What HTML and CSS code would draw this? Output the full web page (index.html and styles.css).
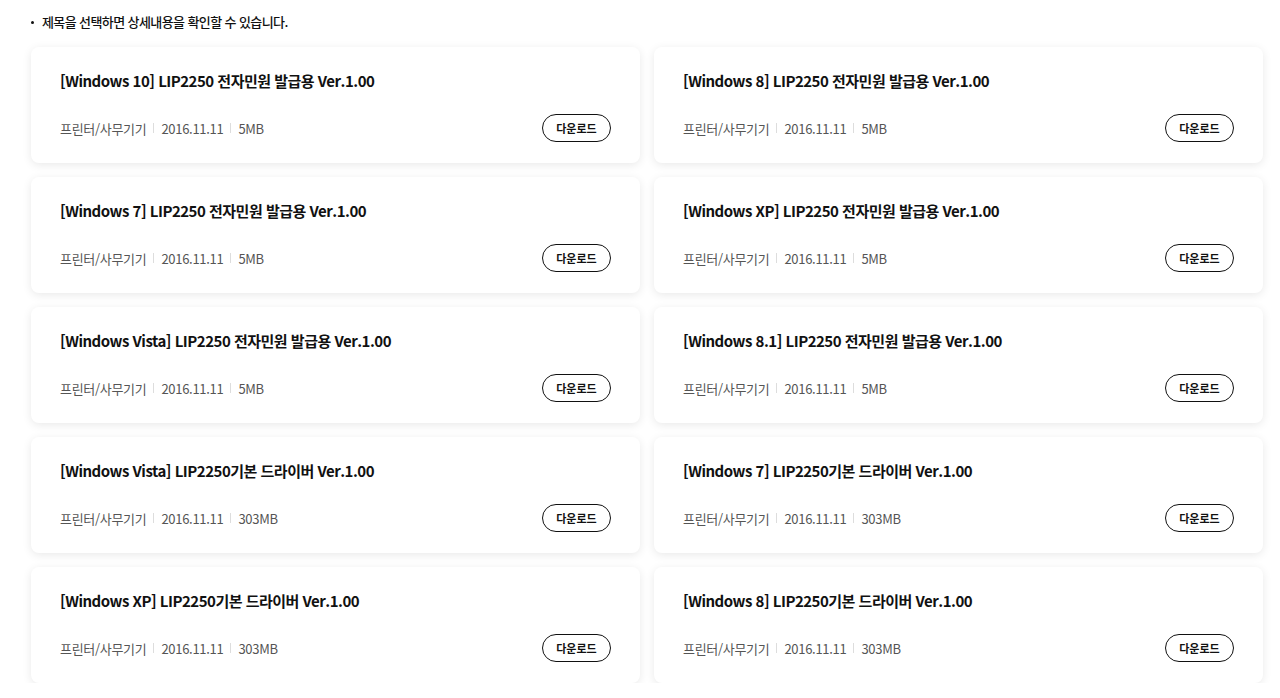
FILE: index.html
```html
<!DOCTYPE html>
<html lang="ko">
<head>
<meta charset="utf-8">
<link rel="stylesheet" href="styles.css">
</head>
<body>
<div class="page">
  <p class="notice"><span class="dot"></span>제목을 선택하면 상세내용을 확인할 수 있습니다.</p>
  <ul class="grid">
    <li class="card"><h3 class="title">[Windows 10] LIP2250 전자민원 발급용 Ver.1.00</h3><div class="meta"><div class="info"><span>프린터/사무기기</span><span class="sep"></span><span>2016.11.11</span><span class="sep"></span><span>5MB</span></div><button class="btn">다운로드</button></div></li>
    <li class="card"><h3 class="title">[Windows 8] LIP2250 전자민원 발급용 Ver.1.00</h3><div class="meta"><div class="info"><span>프린터/사무기기</span><span class="sep"></span><span>2016.11.11</span><span class="sep"></span><span>5MB</span></div><button class="btn">다운로드</button></div></li>
    <li class="card"><h3 class="title">[Windows 7] LIP2250 전자민원 발급용 Ver.1.00</h3><div class="meta"><div class="info"><span>프린터/사무기기</span><span class="sep"></span><span>2016.11.11</span><span class="sep"></span><span>5MB</span></div><button class="btn">다운로드</button></div></li>
    <li class="card"><h3 class="title">[Windows XP] LIP2250 전자민원 발급용 Ver.1.00</h3><div class="meta"><div class="info"><span>프린터/사무기기</span><span class="sep"></span><span>2016.11.11</span><span class="sep"></span><span>5MB</span></div><button class="btn">다운로드</button></div></li>
    <li class="card"><h3 class="title">[Windows Vista] LIP2250 전자민원 발급용 Ver.1.00</h3><div class="meta"><div class="info"><span>프린터/사무기기</span><span class="sep"></span><span>2016.11.11</span><span class="sep"></span><span>5MB</span></div><button class="btn">다운로드</button></div></li>
    <li class="card"><h3 class="title">[Windows 8.1] LIP2250 전자민원 발급용 Ver.1.00</h3><div class="meta"><div class="info"><span>프린터/사무기기</span><span class="sep"></span><span>2016.11.11</span><span class="sep"></span><span>5MB</span></div><button class="btn">다운로드</button></div></li>
    <li class="card"><h3 class="title">[Windows Vista] LIP2250기본 드라이버 Ver.1.00</h3><div class="meta"><div class="info"><span>프린터/사무기기</span><span class="sep"></span><span>2016.11.11</span><span class="sep"></span><span>303MB</span></div><button class="btn">다운로드</button></div></li>
    <li class="card"><h3 class="title">[Windows 7] LIP2250기본 드라이버 Ver.1.00</h3><div class="meta"><div class="info"><span>프린터/사무기기</span><span class="sep"></span><span>2016.11.11</span><span class="sep"></span><span>303MB</span></div><button class="btn">다운로드</button></div></li>
    <li class="card"><h3 class="title">[Windows XP] LIP2250기본 드라이버 Ver.1.00</h3><div class="meta"><div class="info"><span>프린터/사무기기</span><span class="sep"></span><span>2016.11.11</span><span class="sep"></span><span>303MB</span></div><button class="btn">다운로드</button></div></li>
    <li class="card"><h3 class="title">[Windows 8] LIP2250기본 드라이버 Ver.1.00</h3><div class="meta"><div class="info"><span>프린터/사무기기</span><span class="sep"></span><span>2016.11.11</span><span class="sep"></span><span>303MB</span></div><button class="btn">다운로드</button></div></li>
  </ul>
</div>
</body>
</html>
```
FILE: styles.css
```css
* { box-sizing: border-box; }
html, body { margin: 0; padding: 0; background: #fff; }
body {
  font-family: "Noto Sans CJK KR", "Noto Sans", sans-serif;
  color: #111;
}
.page { padding: 12px 17px 0 31px; }
.notice {
  margin: 0;
  display: flex;
  align-items: center;
  font-size: 13px;
  line-height: 20px;
  font-weight: 500;
  color: #111;
  letter-spacing: -0.6px;
}
.dot {
  width: 3px;
  height: 3px;
  border-radius: 50%;
  background: #111;
  margin-right: 8px;
}
.grid {
  list-style: none;
  margin: 15px 0 0;
  padding: 0;
  display: grid;
  grid-template-columns: 609px 609px;
  gap: 14px;
}
.card {
  background: #fff;
  border-radius: 8px;
  box-shadow: 0 2px 10px rgba(0,0,0,0.09);
  padding: 23px 29px 21px 29px;
  height: 116px;
}
.title {
  margin: 0;
  font-size: 15px;
  line-height: 22px;
  font-weight: 700;
  color: #111;
  letter-spacing: -0.5px;
}
.meta {
  margin-top: 22px;
  display: flex;
  align-items: center;
  justify-content: space-between;
}
.info {
  display: flex;
  align-items: center;
  font-size: 13px;
  color: #555;
  letter-spacing: -0.3px;
}
.sep {
  width: 1px;
  height: 10px;
  background: #ddd;
  margin: 0 7px;
}
.btn {
  width: 69px;
  height: 28px;
  border: 1px solid #111;
  border-radius: 14px;
  background: #fff;
  font-family: inherit;
  font-size: 11px;
  font-weight: 700;
  color: #111;
  padding: 0;
}
```
